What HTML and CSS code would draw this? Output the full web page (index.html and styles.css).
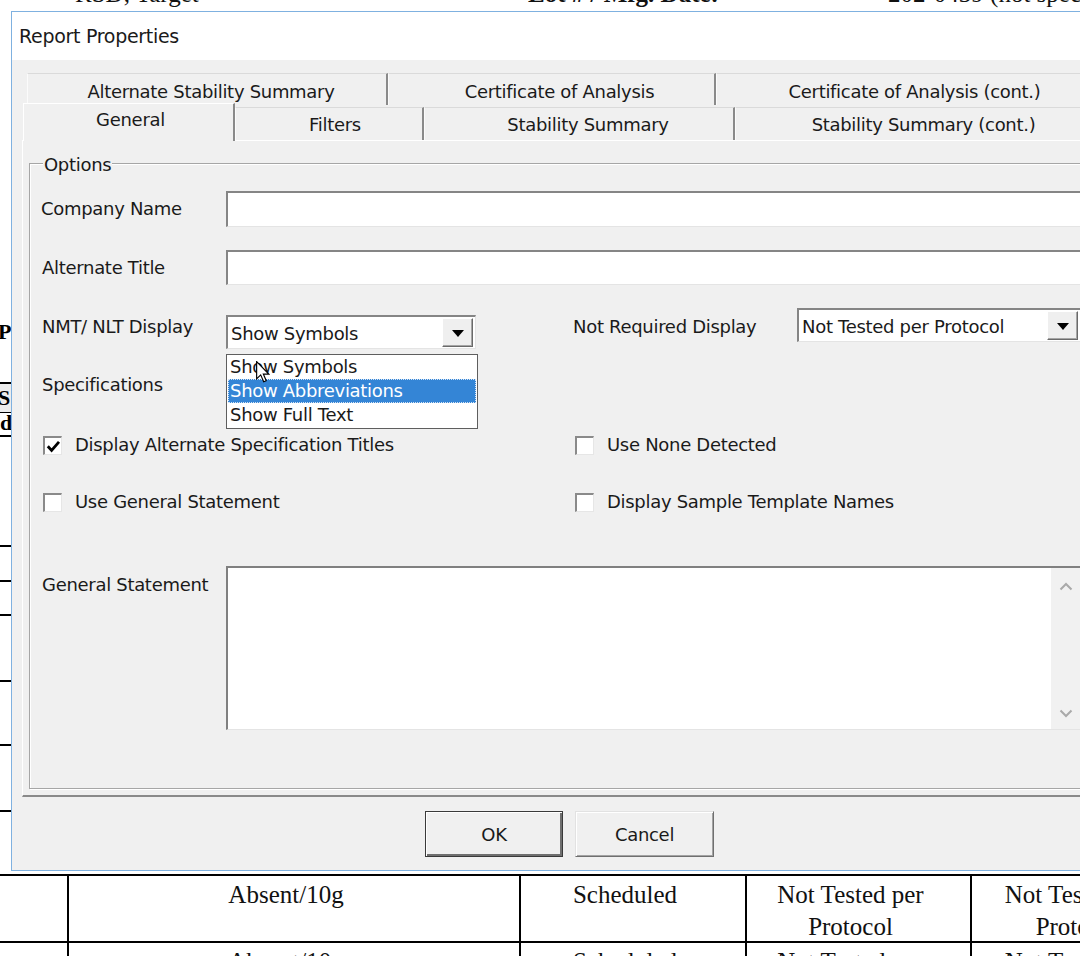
FILE: index.html
```html
<!DOCTYPE html>
<html>
<head>
<meta charset="utf-8">
<title>Report Properties</title>
<link rel="stylesheet" href="styles.css">
</head>
<body>
<div class="screen">
  <div class="doc-top">
    <div class="doc-top-line">
      <span class="dt-a">RSD, Target</span>
      <span class="dt-b">Lot # / Mfg. Date:</span>
      <span class="dt-c">202-0439 (not specified)</span>
    </div>
  </div>

  <div class="middle">
    <div class="doc-left">
      <div class="dl-sp1"></div>
      <div class="dl-p">P</div>
      <div class="dl-sp2"></div>
      <div class="dl-c1">S</div>
      <div class="dl-c2">d</div>
      <div class="dl-sp3"></div>
      <div class="dl-line h35"></div>
      <div class="dl-line h34"></div>
      <div class="dl-line h66"></div>
      <div class="dl-line h64"></div>
      <div class="dl-line h66"></div>
      <div class="dl-line rest"></div>
    </div>

    <div class="dialog">
      <div class="titlebar">Report Properties</div>
      <div class="dlg-body">
        <div class="tabrow back">
          <div class="tab t-alt">Alternate Stability Summary</div>
          <div class="tab t-cert">Certificate of Analysis</div>
          <div class="tab t-certc">Certificate of Analysis (cont.)</div>
        </div>
        <div class="tabrow front">
          <div class="tab t-gen selected">General</div>
          <div class="tab t-fil">Filters</div>
          <div class="tab t-stab">Stability Summary</div>
          <div class="tab t-stabc">Stability Summary (cont.)</div>
        </div>

        <div class="panel">
          <div class="group">
            <div class="legend">Options</div>

            <div class="row row-company">
              <div class="label">Company Name</div>
              <div class="input wide"></div>
            </div>

            <div class="row row-alt">
              <div class="label lbl2">Alternate Title</div>
              <div class="input wide h35"></div>
            </div>

            <div class="row row-nmt">
              <div class="label lbl2 lbl-top">NMT/ NLT Display</div>
              <div class="select-wrap nmt">
                <div class="input select">
                  <span class="sel-text">Show Symbols</span>
                  <span class="sel-btn"><span class="tri"></span></span>
                </div>
                <div class="droplist">
                  <div class="opt first">Show Symbols</div>
                  <div class="opt active">Show Abbreviations</div>
                  <div class="opt">Show Full Text</div>
                </div>
                <svg class="cursor" width="14" height="22" viewBox="0 0 12 19">
                  <path d="M0.5 0.5 L0.5 15.5 L4 12 L6.6 18 L8.8 17 L6.3 11.3 L11 11.3 Z" fill="#fff" stroke="#000" stroke-width="1"/>
                </svg>
              </div>
              <div class="label rlabel lbl-top">Not Required Display</div>
              <div class="select-wrap notreq">
                <div class="input select">
                  <span class="sel-text">Not Tested per Protocol</span>
                  <span class="sel-btn"><span class="tri"></span></span>
                </div>
              </div>
            </div>

            <div class="row row-spec">
              <div class="label lbl2">Specifications</div>
            </div>

            <div class="row row-check c1">
              <div class="check-cell">
                <span class="cbox">
                  <svg width="15" height="15" viewBox="0 0 15 15"><path d="M1.8 7.2 L5.6 11.4 L13 2.8" fill="none" stroke="#000" stroke-width="2.8"/></svg>
                </span>
                <span class="ctext">Display Alternate Specification Titles</span>
              </div>
              <div class="check-cell">
                <span class="cbox"></span>
                <span class="ctext">Use None Detected</span>
              </div>
            </div>

            <div class="row row-check c2">
              <div class="check-cell">
                <span class="cbox"></span>
                <span class="ctext">Use General Statement</span>
              </div>
              <div class="check-cell">
                <span class="cbox"></span>
                <span class="ctext">Display Sample Template Names</span>
              </div>
            </div>

            <div class="row row-gs">
              <div class="label lbl2 lbl-top">General Statement</div>
              <div class="textarea">
                <div class="ta-content"></div>
                <div class="ta-scroll">
                  <svg width="14" height="9" viewBox="0 0 14 9"><path d="M1.5 7.5 L7 2 L12.5 7.5" fill="none" stroke="#a9a9a9" stroke-width="2"/></svg>
                  <svg width="14" height="9" viewBox="0 0 14 9"><path d="M1.5 1.5 L7 7 L12.5 1.5" fill="none" stroke="#a9a9a9" stroke-width="2"/></svg>
                </div>
              </div>
            </div>
          </div>
        </div>

        <div class="buttons">
          <div class="btn default">OK</div>
          <div class="btn">Cancel</div>
        </div>
      </div>
    </div>
  </div>

  <div class="doc-bottom">
    <div class="tbl">
      <div class="cell c0"></div>
      <div class="cell">Absent/10g</div>
      <div class="cell">Scheduled</div>
      <div class="cell">Not Tested per<br>Protocol</div>
      <div class="cell">Not Tested per<br>Protocol</div>
      <div class="cell c0 r2"></div>
      <div class="cell r2">Absent/10g</div>
      <div class="cell r2">Scheduled</div>
      <div class="cell r2">Not Tested per</div>
      <div class="cell r2">Not Tested per</div>
    </div>
  </div>
</div>
</body>
</html>
```

FILE: styles.css
```css
* { box-sizing: border-box; }

html, body {
  margin: 0;
  padding: 0;
  background: #fff;
}

body {
  width: 1080px;
  height: 956px;
  overflow: hidden;
  font-family: "DejaVu Sans", sans-serif;
  color: #1a1a1a;
}

.screen {
  width: 1080px;
  height: 956px;
  overflow: hidden;
  background: #fff;
}

/* ---------- document behind the dialog ---------- */
.doc-top {
  height: 11px;
  overflow: hidden;
  font-family: "Liberation Serif", serif;
  font-size: 25px;
  color: #111;
}

.doc-top-line {
  display: flex;
  margin-top: -19px;
  line-height: 25px;
  white-space: nowrap;
  padding-left: 75px;
}

.dt-a { width: 453px; flex: none; }
.dt-b { width: 360px; flex: none; font-weight: bold; }
.dt-c { flex: none; }

.middle {
  display: flex;
  height: 860px;
}

.doc-left {
  width: 11px;
  flex: none;
  overflow: hidden;
  display: flex;
  flex-direction: column;
  font-family: "Liberation Serif", serif;
  font-weight: bold;
  font-size: 22px;
  color: #000;
}

.dl-sp1 { height: 309px; flex: none; }
.dl-p { height: 24px; line-height: 24px; flex: none; margin-left: -2px; }
.dl-sp2 { height: 38px; flex: none; }
.dl-c1 {
  height: 31px;
  flex: none;
  border-top: 2px solid #000;
  border-bottom: 1px solid #000;
  background: #ececec;
  line-height: 28px;
  margin-left: -2px;
}
.dl-c2 {
  height: 24px;
  flex: none;
  border-bottom: 2px solid #000;
  line-height: 20px;
}
.dl-sp3 { height: 108px; flex: none; }
.dl-line { border-top: 2px solid #000; flex: none; }
.dl-line.h35 { height: 35px; }
.dl-line.h34 { height: 34px; }
.dl-line.h66 { height: 66px; }
.dl-line.h64 { height: 64px; }
.dl-line.rest { height: 60px; }

.doc-bottom {
  padding-top: 3px;
  font-family: "Liberation Serif", serif;
  font-size: 25px;
  color: #111;
}

.tbl {
  display: grid;
  grid-template-columns: 67px 452px 226px 225px 230px;
  grid-template-rows: 67px 40px;
  border-top: 2px solid #000;
}

.cell {
  border-left: 2px solid #000;
  border-bottom: 2px solid #000;
  text-align: center;
  line-height: 32px;
  padding-top: 3px;
  padding-right: 16px;
  white-space: nowrap;
}

.cell.c0 { border-left: none; }
.cell.r2 { border-bottom: none; }

/* ---------- dialog ---------- */
.dialog {
  width: 1110px;
  flex: none;
  border: 1px solid #7fb1e0;
  border-right: none;
  display: flex;
  flex-direction: column;
  background: #f0f0f0;
  font-size: 18px;
  letter-spacing: -0.3px;
}

.titlebar {
  height: 48px;
  flex: none;
  background: #fff;
  padding-left: 7px;
  line-height: 48px;
  font-size: 19px;
  color: #1a1a1a;
}

.dlg-body {
  flex: 1;
  padding-top: 13px;
  background: #f0f0f0;
}

.tabrow {
  display: flex;
  white-space: nowrap;
}

.tabrow.back {
  height: 32px;
  margin-left: 15px;
}

.tabrow.front {
  height: 35px;
  margin-left: 11px;
  align-items: flex-end;
}

.tab {
  flex: none;
  display: flex;
  align-items: center;
  justify-content: center;
  border-top: 1px solid #dadada;
  border-left: 1px solid #fbfbfb;
  border-right: 2px solid #8a8a8a;
  background: #f0f0f0;
  color: #1a1a1a;
}

.tabrow.back .tab { height: 32px; padding-top: 3px; }
.tabrow.front .tab { height: 33px; padding-top: 1px; }

.t-alt { width: 361px; padding-left: 8px; }
.t-cert { width: 328px; padding-left: 16px; }
.t-certc { width: 398px; }

.t-gen { width: 212px; padding-left: 4px; }
.t-fil { width: 189px; padding-left: 12px; }
.t-stab { width: 311px; padding-left: 18px; }
.t-stabc { width: 378px; }

.tabrow.front .tab.selected {
  height: 38px;
  margin-bottom: -1px;
  padding-top: 0;
  padding-bottom: 6px;
  position: relative;
  z-index: 2;
  border-top: 1px solid #fff;
  border-left: 1px solid #fff;
}

.panel {
  margin-left: 10px;
  height: 657px;
  border-top: 1px solid #fff;
  border-left: 1px solid #fff;
  border-bottom: 2px solid #8a8a8a;
  position: relative;
  z-index: 1;
}

.group {
  margin: 22px 0 0 6px;
  height: 626px;
  width: 1090px;
  border: 1px solid #a6a6a6;
  box-shadow: inset 1px 1px 0 #fff, 1px 1px 0 #fff;
  padding-left: 11px;
}

.legend {
  width: max-content;
  margin: -10px 0 0 2px;
  padding: 0 1px;
  background: #f0f0f0;
  line-height: 22px;
}

.row {
  display: flex;
  white-space: nowrap;
}

.label {
  width: 185px;
  flex: none;
  line-height: 22px;
}

.lbl2 { padding-left: 1px; }
.lbl-top { margin-top: 8px; }

.row-company { margin-top: 15px; height: 36px; align-items: center; }
.row-alt { margin-top: 23px; height: 35px; align-items: center; }
.row-nmt { margin-top: 23px; height: 41px; align-items: flex-start; }
.row-spec { margin-top: 25px; }
.row-check { height: 20px; align-items: center; }
.row-check.c1 { margin-top: 39px; }
.row-check.c2 { margin-top: 37px; }
.row-gs { margin-top: 54px; align-items: flex-start; }

.input {
  background: #fff;
  border-style: solid;
  border-width: 2px 1px 1px 2px;
  border-color: #858585 #e4e4e4 #e4e4e4 #858585;
  flex: none;
}

.input.wide { width: 856px; height: 36px; }
.input.wide.h35 { height: 35px; }

.select-wrap {
  position: relative;
  flex: none;
}

.select-wrap.nmt { width: 250px; height: 34px; margin-top: 7px; }
.select-wrap.notreq { width: 284px; height: 34px; }

.rlabel { width: 224px; margin-left: 97px; }

.select {
  width: 100%;
  height: 100%;
  display: flex;
  align-items: center;
  justify-content: space-between;
  padding: 0 2px 0 3px;
}

.sel-text {
  line-height: 22px;
  padding-top: 2px;
}

.sel-btn {
  width: 31px;
  height: 29px;
  display: flex;
  align-items: center;
  justify-content: center;
  background: #efefef;
  border: 1px solid;
  border-color: #fff #6a6a6a #6a6a6a #fff;
  box-shadow: inset -1px -1px 0 #a5a5a5;
}

.tri {
  width: 0;
  height: 0;
  border-left: 6px solid transparent;
  border-right: 6px solid transparent;
  border-top: 7px solid #000;
  margin-top: 2px;
}

.droplist {
  position: absolute;
  top: 39px;
  left: 0;
  width: 252px;
  height: 75px;
  background: #fff;
  border: 1px solid #5e5e5e;
  z-index: 5;
}

.opt {
  height: 24px;
  line-height: 24px;
  padding-left: 2px;
  margin: 0 1px;
}

.opt.first { margin-top: 0; }

.opt.active {
  background: #3485d6;
  color: #fff;
  outline: 1px dotted #d5e4f5;
  outline-offset: -1px;
}

.cursor {
  position: absolute;
  left: 30px;
  top: 46px;
  z-index: 6;
}

.check-cell {
  display: flex;
  align-items: center;
  flex: none;
}

.check-cell:first-child {
  width: 532px;
  margin-left: 2px;
}

.cbox {
  width: 19px;
  height: 19px;
  flex: none;
  background: #fff;
  border-style: solid;
  border-width: 2px 1px 1px 2px;
  border-color: #8a8a8a #e6e6e6 #e6e6e6 #8a8a8a;
  display: flex;
  align-items: center;
  justify-content: center;
  margin-top: 1px;
}

.ctext {
  margin-left: 13px;
  line-height: 20px;
}

.textarea {
  width: 855px;
  height: 164px;
  flex: none;
  display: flex;
  border-style: solid;
  border-width: 2px 1px 1px 2px;
  border-color: #808080 #e4e4e4 #e4e4e4 #808080;
  background: #fff;
}

.ta-content { flex: 1; }

.ta-scroll {
  width: 29px;
  flex: none;
  background: #f1f1f1;
  display: flex;
  flex-direction: column;
  justify-content: space-between;
  align-items: center;
  padding: 14px 0 11px;
}

.buttons {
  display: flex;
  gap: 12px;
  margin: 14px 0 0 413px;
}

.btn {
  width: 139px;
  height: 46px;
  display: flex;
  align-items: center;
  justify-content: center;
  background: #f0f0f0;
  border: 1px solid;
  border-color: #e2e2e2 #6f6f6f #6f6f6f #e2e2e2;
  box-shadow: inset 1px 1px 0 #fff, inset -1px -1px 0 #a3a3a3;
}

.btn.default {
  width: 138px;
  border: 1px solid #3a3a3a;
  box-shadow: inset 1px 1px 0 #fff, inset -2px -2px 0 #6f6f6f;
}
```
